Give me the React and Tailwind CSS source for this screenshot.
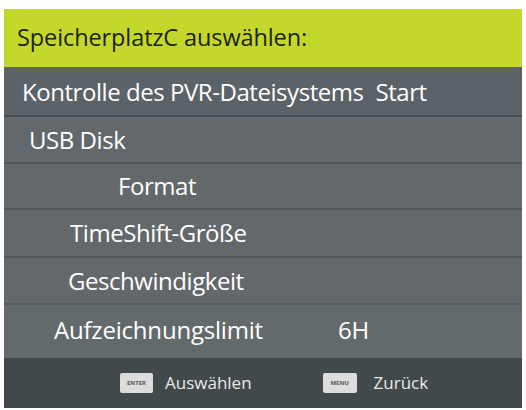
export default function App() {
  const font = { fontFamily: '"Open Sans", "Liberation Sans", sans-serif' };
  return (
    <div className="w-[526px] h-[410px] bg-white pt-[9px] pl-[4px] pr-[4px]" style={font}>
      <div className="flex flex-col w-[518px] text-white text-[24px] tracking-[-0.45px]">
        {/* header */}
        <div className="h-[58px] bg-[#c3d82b] flex items-center pl-[13px] text-[#1d2310] text-[23.5px] tracking-[-0.1px]">
          SpeicherplatzC auswählen:
        </div>
        <div className="h-[50px] bg-[#5b6268] flex items-center pl-[18px] pt-[2px] border-b-2 border-[#474d51]">
          <span>Kontrolle des PVR-Dateisystems</span>
          <span className="ml-[12px]">Start</span>
        </div>
        <div className="h-[47px] bg-[#62686b] flex items-center pl-[25px] border-b-2 border-[#50575a]">
          USB Disk
        </div>
        <div className="h-[46px] bg-[#63696b] flex items-center pl-[114px] border-b-2 border-[#51585a]">
          Format
        </div>
        <div className="h-[48px] bg-[#63696b] flex items-center pl-[66px] border-b-2 border-[#51585a]">
          TimeShift-Größe
        </div>
        <div className="h-[47px] bg-[#63696b] flex items-center pl-[64px] border-b-2 border-[#555c5e]">
          Geschwindigkeit
        </div>
        <div className="h-[53px] bg-[#636a6b] flex items-center pl-[50px] pb-[4px] tracking-[-0.2px]">
          <span className="w-[284px]">Aufzeichnungslimit</span>
          <span>6H</span>
        </div>
        {/* footer */}
        <div className="h-[50px] bg-[#42494b] flex items-center text-[17px] tracking-normal text-[#e8eaea]">
          <div className="ml-[116px] w-[33px] h-[20px] bg-[#dcdcdc] rounded-[2px] flex items-center justify-center">
            <span className="text-[6px] font-bold text-[#555] leading-none">ENTER</span>
          </div>
          <span className="ml-[12px]">Auswählen</span>
          <div className="ml-[71px] w-[34px] h-[20px] bg-[#dcdcdc] rounded-[2px] flex items-center justify-center">
            <span className="text-[6px] font-bold text-[#555] leading-none">MENU</span>
          </div>
          <span className="ml-[17px]">Zurück</span>
        </div>
      </div>
    </div>
  );
}
